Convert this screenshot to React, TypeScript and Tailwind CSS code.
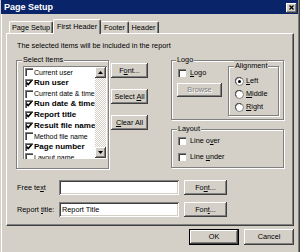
import type { ReactNode } from "react";

type Item = { label: string; checked: boolean };

const items: Item[] = [
  { label: "Current user", checked: false },
  { label: "Run user", checked: true },
  { label: "Current date & time", checked: false },
  { label: "Run date & time", checked: true },
  { label: "Report title", checked: true },
  { label: "Result file name", checked: true },
  { label: "Method file name", checked: false },
  { label: "Page number", checked: true },
  { label: "Layout name", checked: false },
];

const raised =
  "bg-[#d4d0c8] shadow-[inset_-1px_-1px_0_#404040,inset_1px_1px_0_#ffffff,inset_-2px_-2px_0_#808080]";
const sunken =
  "bg-white shadow-[inset_1px_1px_0_#808080,inset_-1px_-1px_0_#ffffff,inset_2px_2px_0_#404040,inset_-2px_-2px_0_#d4d0c8]";

function Button({ className, children }: { className: string; children: ReactNode }) {
  return (
    <div className={`${raised} flex items-center justify-center leading-none ${className}`}>
      {children}
    </div>
  );
}

function Group({
  label,
  className,
  labelClass,
  children,
}: {
  label: ReactNode;
  className: string;
  labelClass: string;
  children: ReactNode;
}) {
  return (
    <div
      className={`border border-[#808080] shadow-[inset_1px_1px_0_#ffffff,1px_1px_0_#ffffff] ${className}`}
    >
      <div
        className={`-mt-[6px] h-[10px] w-fit px-[1px] bg-[#d4d0c8] leading-[10px] ${labelClass}`}
      >
        {label}
      </div>
      {children}
    </div>
  );
}

function Check({ checked }: { checked: boolean }) {
  return (
    <div className="w-[8px] h-[8px] shrink-0 bg-white shadow-[inset_1px_1px_0_#808080,inset_2px_2px_0_#404040,inset_-1px_-1px_0_#ffffff]">
      {checked && (
        <svg width="8" height="8" viewBox="0 0 8 8">
          <path d="M1.6 3.8 L3.2 5.6 L6.6 1.8" fill="none" stroke="#000" strokeWidth="1.6" />
        </svg>
      )}
    </div>
  );
}

function Radio({ checked }: { checked: boolean }) {
  return (
    <svg width="9" height="9" viewBox="0 0 9 9" className="shrink-0">
      <circle cx="4.5" cy="4.5" r="4" fill="#fff" stroke="#808080" strokeWidth="1" />
      <path d="M1.3 6.5 A3.5 3.5 0 0 1 6.5 1.3" fill="none" stroke="#404040" strokeWidth="1" />
      {checked && <circle cx="4.5" cy="4.5" r="1.5" fill="#000" />}
    </svg>
  );
}

function Arrow({ up }: { up: boolean }) {
  return (
    <div className={`${raised} w-[11px] h-[11px] flex items-center justify-center`}>
      <svg width="5" height="3" viewBox="0 0 5 3">
        <polygon points={up ? "2.5,0 5,3 0,3" : "0,0 5,0 2.5,3"} fill="#000" />
      </svg>
    </div>
  );
}

export default function App() {
  return (
    <div className="w-[300px] h-[252px] overflow-hidden bg-[#d4d0c8] flex flex-col text-[7.3px] text-black font-['Liberation_Sans',Arial,sans-serif] shadow-[inset_-1px_0_0_#404040,inset_-2px_0_0_#808080,inset_1px_0_0_#d4d0c8,inset_2px_0_0_#ffffff]">
      {/* title bar */}
      <div className="ml-[1px] mr-[2px] h-[14px] bg-[#0a246a] flex items-center pl-[3px]">
        <span className="text-white font-bold text-[9px] leading-none">Page Setup</span>
        <div className={`${raised} ml-auto mr-[1px] mt-[1px] w-[11px] h-[10px] flex items-center justify-center`}>
          <svg width="5" height="5" viewBox="0 0 5 5">
            <path d="M0.5 0.5 L4.5 4.5 M4.5 0.5 L0.5 4.5" stroke="#000" strokeWidth="1.3" />
          </svg>
        </div>
      </div>

      {/* tabs */}
      <div className="flex items-end h-[14px] mt-[5px] pl-[9px]">
        <div className="w-[44px] h-[12px] flex items-center justify-center leading-none border-t border-l border-r border-t-white border-l-white border-r-[#404040] rounded-t-[2px] shadow-[inset_-1px_0_0_#808080]">
          Page Setup
        </div>
        <div className="relative z-10 -mb-[1px] w-[48px] h-[15px] pb-[1px] flex items-center justify-center leading-none bg-[#d4d0c8] border-t border-l border-r border-t-white border-l-white border-r-[#404040] rounded-t-[2px] shadow-[inset_-1px_0_0_#808080]">
          First Header
        </div>
        <div className="w-[28px] h-[12px] flex items-center justify-center leading-none border-t border-r border-t-white border-r-[#404040] rounded-t-[2px] shadow-[inset_-1px_0_0_#808080]">
          Footer
        </div>
        <div className="w-[30px] h-[12px] flex items-center justify-center leading-none border-t border-r border-t-white border-r-[#404040] rounded-t-[2px] shadow-[inset_-1px_0_0_#808080]">
          Header
        </div>
      </div>

      {/* panel */}
      <div className="mx-[6px] h-[193px] border border-t-white border-l-white border-r-[#404040] border-b-[#404040] shadow-[inset_-1px_-1px_0_#808080] flex flex-col pl-[9px]">
        <div className="mt-[7px] h-[10px] leading-[10px] pl-[1px]">
          The selected items will be included in the report
        </div>

        <div className="flex items-start mt-[9px]">
          <Group label="Select Items" className="w-[93px] h-[109px]" labelClass="ml-[5px]">
            <div className="mt-[1px] ml-[6px] w-[84px] h-[93px] bg-white flex overflow-hidden shadow-[inset_1px_1px_0_#808080,inset_-1px_-1px_0_#ffffff]">
              <div className="flex-1 min-w-0 pt-[1px] pl-[2px] overflow-hidden">
                {items.map((it) => (
                  <div key={it.label} className="h-[10.65px] flex items-center gap-[1px] whitespace-nowrap">
                    <Check checked={it.checked} />
                    <span
                      className={
                        it.checked ? "font-bold text-[8px] leading-none" : "text-[7px] leading-none"
                      }
                    >
                      {it.label}
                    </span>
                  </div>
                ))}
              </div>
              <div className="w-[11px] flex flex-col mr-[1px] mt-[1px] mb-[1px]">
                <Arrow up />
                <div className="flex-1 bg-[repeating-conic-gradient(#ffffff_0_25%,#d4d0c8_0_50%)] bg-[length:2px_2px]" />
                <Arrow up={false} />
              </div>
            </div>
          </Group>

          <div className="ml-[2px] w-[37px] flex flex-col">
            <Button className="mt-[3px] h-[15px]">
              <span>
                F<u>o</u>nt...
              </span>
            </Button>
            <Button className="mt-[11px] h-[15px]">
              <span>
                Select <u>A</u>ll
              </span>
            </Button>
            <Button className="mt-[11px] h-[15px]">
              <span>
                <u>C</u>lear All
              </span>
            </Button>
          </div>

          <div className="ml-[23px] w-[113px] flex flex-col">
            <Group label="Logo" className="h-[60px]" labelClass="ml-[4px]">
              <div className="flex">
                <div className="w-[56px] flex flex-col">
                  <div className="mt-[3px] ml-[6px] h-[9px] flex items-center gap-[4px]">
                    <Check checked={false} />
                    <span className="leading-none">
                      <u>L</u>ogo
                    </span>
                  </div>
                  <Button className="mt-[6px] ml-[5px] w-[45px] h-[14px]">
                    <span className="text-[#808080] [text-shadow:1px_1px_0_#ffffff]">Browse</span>
                  </Button>
                </div>
                <Group label="Alignment" className="mt-[1px] w-[51px] h-[50px]" labelClass="ml-[5px]">
                  <div className="mt-[5px] pl-[6px] flex flex-col gap-[3px]">
                    {[
                      { k: "L", r: "eft", on: true },
                      { k: "M", r: "iddle", on: false },
                      { k: "R", r: "ight", on: false },
                    ].map((o) => (
                      <div key={o.k} className="h-[10px] flex items-center gap-[2px]">
                        <Radio checked={o.on} />
                        <span className="leading-none">
                          <u>{o.k}</u>
                          {o.r}
                        </span>
                      </div>
                    ))}
                  </div>
                </Group>
              </div>
            </Group>

            <Group label="Layout" className="mt-[9px] h-[39px]" labelClass="ml-[5px]">
              <div className="mt-[2px] pl-[6px] flex flex-col gap-[6px]">
                <div className="h-[10px] flex items-center gap-[4px]">
                  <Check checked={false} />
                  <span className="leading-none">
                    Line o<u>v</u>er
                  </span>
                </div>
                <div className="h-[10px] flex items-center gap-[4px]">
                  <Check checked={false} />
                  <span className="leading-none">
                    Line <u>u</u>nder
                  </span>
                </div>
              </div>
            </Group>
          </div>
        </div>

        <div className="mt-[11px] flex items-center h-[15px]">
          <div className="w-[43px] pl-[1px] leading-none">
            Free te<u>x</u>t
          </div>
          <div className={`${sunken} w-[120px] h-[15px]`} />
          <Button className="ml-[5px] w-[43px] h-[15px]">
            <span>
              Fo<u>n</u>t...
            </span>
          </Button>
        </div>
        <div className="mt-[7px] flex items-center h-[15px]">
          <div className="w-[43px] pl-[1px] leading-none">
            Report <u>t</u>itle:
          </div>
          <div className={`${sunken} w-[120px] h-[15px] flex items-center pl-[3px] leading-none`}>
            Report Title
          </div>
          <Button className="ml-[5px] w-[43px] h-[15px]">
            <span>
              Fon<u>t</u>...
            </span>
          </Button>
        </div>
      </div>

      {/* dialog buttons */}
      <div className="mt-[3px] flex justify-end gap-[5px] pr-[6px]">
        <div className="w-[50px] h-[16px] border border-black">
          <Button className="w-full h-full">OK</Button>
        </div>
        <Button className="w-[50px] h-[16px]">Cancel</Button>
      </div>
    </div>
  );
}
